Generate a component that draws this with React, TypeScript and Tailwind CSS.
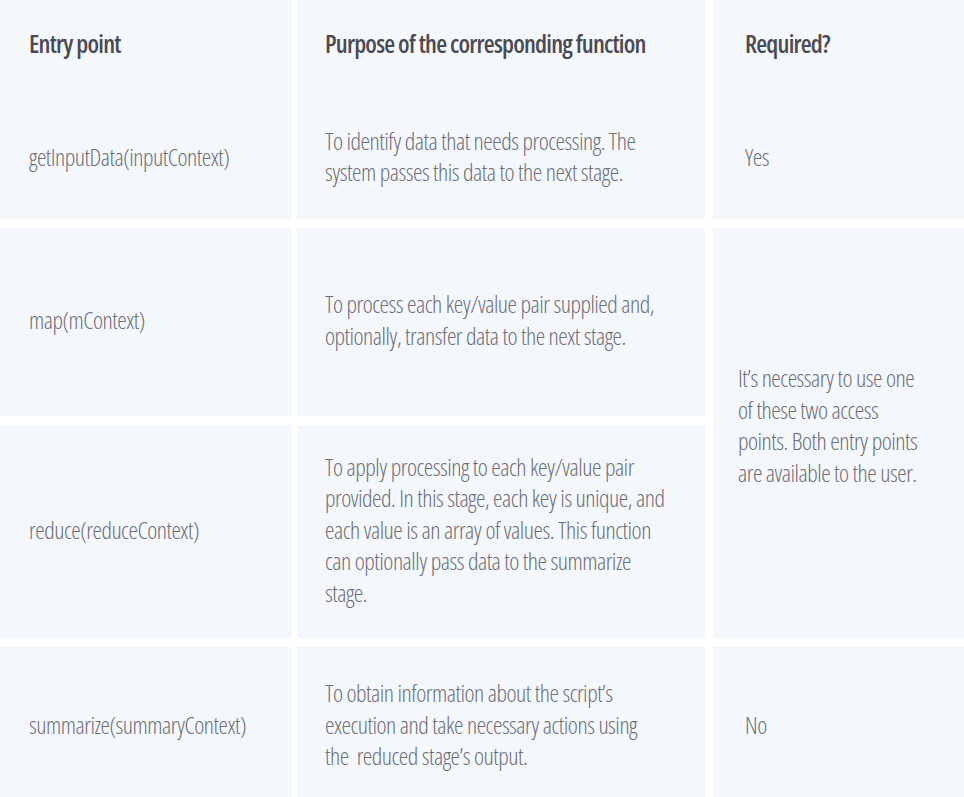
import React from 'react';

const bodyText = "text-[24px] font-light leading-[31.5px] tracking-[-0.5px] text-[#6f6f77] whitespace-nowrap";
const headText = "text-[25px] font-semibold leading-[32px] tracking-[-0.8px] text-[#4b4b51] whitespace-nowrap";

const Lines = ({ lines }: { lines: string[] }) => (
    <div className={bodyText}>
        {lines.map((l, i) => (
            <div key={i}>{l}</div>
        ))}
    </div>
);

export default function App() {
    return (
        <div className="bg-white min-h-screen" style={{ fontFamily: '"Open Sans", "Liberation Sans", sans-serif', fontStretch: '75%' }}>
            <div className="grid w-full grid-cols-[292px_408px_1fr] grid-rows-[219px_188px_213px_158px] gap-x-[5px] gap-y-[9px]">
                {/* header + first row */}
                <div className="flex flex-col bg-[#f4f8fd] pl-[29px]">
                    <div className="h-[95px] pt-[27px]">
                        <div className={headText}>Entry point</div>
                    </div>
                    <div className="flex flex-1 items-center">
                        <Lines lines={['getInputData(inputContext)']} />
                    </div>
                </div>
                <div className="flex flex-col bg-[#f4f8fd] pl-[28px]">
                    <div className="h-[95px] pt-[27px]">
                        <div className={headText}>Purpose of the corresponding function</div>
                    </div>
                    <div className="flex flex-1 items-center pb-[2px]">
                        <Lines lines={['To identify data that needs processing. The', 'system passes this data to the next stage.']} />
                    </div>
                </div>
                <div className="ml-[3px] flex flex-col bg-[#f4f8fd] pl-[32px]">
                    <div className="h-[95px] pt-[27px]">
                        <div className={headText}>Required?</div>
                    </div>
                    <div className="flex flex-1 items-center">
                        <Lines lines={['Yes']} />
                    </div>
                </div>

                {/* map */}
                <div className="flex items-center bg-[#f4f8fd] pb-[5px] pl-[29px]">
                    <Lines lines={['map(mContext)']} />
                </div>
                <div className="flex items-center bg-[#f4f8fd] pb-[5px] pl-[28px]">
                    <Lines lines={['To process each key/value pair supplied and,', 'optionally, transfer data to the next stage.']} />
                </div>
                <div className="row-span-2 ml-[3px] flex items-center bg-[#f4f8fd] pb-[16px] pl-[25px]">
                    <Lines lines={['It’s necessary to use one', 'of these two access', 'points. Both entry points', 'are available to the user.']} />
                </div>

                {/* reduce */}
                <div className="flex items-center bg-[#f4f8fd] pb-[4px] pl-[29px]">
                    <Lines lines={['reduce(reduceContext)']} />
                </div>
                <div className="flex items-center bg-[#f4f8fd] pb-[4px] pl-[28px]">
                    <Lines
                        lines={[
                            'To apply processing to each key/value pair',
                            'provided. In this stage, each key is unique, and',
                            'each value is an array of values. This function',
                            'can optionally pass data to the summarize',
                            'stage.',
                        ]}
                    />
                </div>

                {/* summarize */}
                <div className="flex items-center bg-[#f4f8fd] pb-[3px] pl-[29px]">
                    <Lines lines={['summarize(summaryContext)']} />
                </div>
                <div className="flex items-center bg-[#f4f8fd] pb-[3px] pl-[28px]">
                    <Lines
                        lines={[
                            'To obtain information about the script’s',
                            'execution and take necessary actions using',
                            'the\u00a0 reduced stage’s output.',
                        ]}
                    />
                </div>
                <div className="ml-[3px] flex items-center bg-[#f4f8fd] pb-[3px] pl-[32px]">
                    <Lines lines={['No']} />
                </div>
            </div>
        </div>
    );
}
